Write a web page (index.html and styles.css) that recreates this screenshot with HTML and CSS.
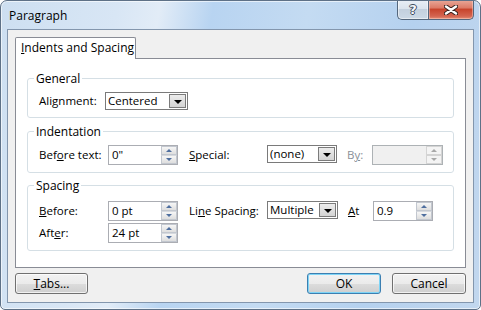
FILE: index.html
```html
<!DOCTYPE html>
<html lang="en">
<head>
    <meta charset="UTF-8">
    <title>Paragraph</title>
    <link rel="stylesheet" href="styles.css">
</head>
<body>
    <div class="window">
        <div class="titlebar">
            <span class="title">Paragraph</span>
            <div class="caption-buttons">
                <div class="cap-btn help"><span class="help-glyph">?</span></div>
                <div class="cap-btn close">
                    <svg width="14" height="10" viewBox="0 0 14 10">
                        <path d="M2 1.5 L12 8.5 M12 1.5 L2 8.5" stroke="#3b2420" stroke-width="4.4" stroke-linecap="round"/>
                        <path d="M2 1.5 L12 8.5 M12 1.5 L2 8.5" stroke="#ffffff" stroke-width="2.4" stroke-linecap="round"/>
                    </svg>
                </div>
            </div>
        </div>
        <div class="client">
            <div class="tabs">
                <div class="tab active"><u>I</u>ndents and Spacing</div>
            </div>
            <div class="tab-panel">
                <fieldset class="group group-general">
                    <legend>General</legend>
                    <div class="row row-short">
                        <label class="lbl lbl-align">Ali<u>g</u>nment:</label>
                        <div class="combo combo-align">
                            <span class="combo-text">Centered</span>
                            <span class="combo-btn"><span class="arrow-down"></span></span>
                        </div>
                    </div>
                </fieldset>

                <fieldset class="group group-indent">
                    <legend>Indentation</legend>
                    <div class="row">
                        <label class="lbl lbl-first">Bef<u>o</u>re text:</label>
                        <div class="spin">
                            <span class="spin-text">0"</span>
                            <span class="spin-btns">
                                <span class="spin-up"><span class="tri-up"></span></span>
                                <span class="spin-down"><span class="tri-down"></span></span>
                            </span>
                        </div>
                        <label class="lbl lbl-second"><u>S</u>pecial:</label>
                        <div class="combo combo-small">
                            <span class="combo-text">(none)</span>
                            <span class="combo-btn"><span class="arrow-down"></span></span>
                        </div>
                        <label class="lbl lbl-third disabled">B<u>y</u>:</label>
                        <div class="spin spin-disabled">
                            <span class="spin-text"></span>
                            <span class="spin-btns">
                                <span class="spin-up"><span class="tri-up"></span></span>
                                <span class="spin-down"><span class="tri-down"></span></span>
                            </span>
                        </div>
                    </div>
                </fieldset>

                <fieldset class="group group-spacing">
                    <legend>Spacing</legend>
                    <div class="row">
                        <label class="lbl lbl-first"><u>B</u>efore:</label>
                        <div class="spin">
                            <span class="spin-text">0 pt</span>
                            <span class="spin-btns">
                                <span class="spin-up"><span class="tri-up"></span></span>
                                <span class="spin-down"><span class="tri-down"></span></span>
                            </span>
                        </div>
                        <label class="lbl lbl-second">Li<u>n</u>e Spacing:</label>
                        <div class="combo combo-small combo-line">
                            <span class="combo-text">Multiple</span>
                            <span class="combo-btn"><span class="arrow-down"></span></span>
                        </div>
                        <label class="lbl lbl-third"><u>A</u>t</label>
                        <div class="spin spin-at">
                            <span class="spin-text">0.9</span>
                            <span class="spin-btns">
                                <span class="spin-up"><span class="tri-up"></span></span>
                                <span class="spin-down"><span class="tri-down"></span></span>
                            </span>
                        </div>
                    </div>
                    <div class="row">
                        <label class="lbl lbl-first">Aft<u>e</u>r:</label>
                        <div class="spin">
                            <span class="spin-text">24 pt</span>
                            <span class="spin-btns">
                                <span class="spin-up"><span class="tri-up"></span></span>
                                <span class="spin-down"><span class="tri-down"></span></span>
                            </span>
                        </div>
                    </div>
                </fieldset>
            </div>
            <div class="footer">
                <button class="btn"><u>T</u>abs...</button>
                <button class="btn btn-default">OK</button>
                <button class="btn">Cancel</button>
            </div>
        </div>
    </div>
</body>
</html>
```

FILE: styles.css
```css
body {
    margin: 0;
    font-family: "Open Sans", "Noto Sans", sans-serif;
    font-size: 11.5px;
    color: #000;
    background: #ffffff;
}

u {
    text-decoration: underline;
    text-underline-offset: 1px;
}

/* window frame */
.window {
    width: 481px;
    height: 310px;
    box-sizing: border-box;
    border: 1px solid #5e7187;
    border-radius: 7px 7px 5px 5px;
    background: linear-gradient(100deg, #cddff1 0%, #d8e6f5 22%, #e2ecf7 30%, #b8d4f1 40%, #c4dbf2 58%, #b5d1ef 78%, #c2d7ee 100%);
    box-shadow: inset 0 0 0 1px rgba(255, 255, 255, 0.6);
    display: flex;
    flex-direction: column;
    overflow: hidden;
}

.titlebar {
    height: 28px;
    display: flex;
    align-items: flex-start;
    padding-left: 8px;
}

.title {
    margin-top: 7px;
    line-height: 16px;
    font-size: 12px;
}

.caption-buttons {
    display: flex;
    margin-left: auto;
    margin-right: 6px;
    margin-top: -1px;
}

.cap-btn {
    height: 20px;
    box-sizing: border-box;
    border: 1px solid #54677d;
    border-top: none;
    display: flex;
    align-items: center;
    justify-content: center;
}

.help {
    width: 31px;
    border-right: none;
    border-radius: 0 0 0 5px;
    background: linear-gradient(#e9eff6 0%, #dbe4ee 45%, #c3d0de 50%, #ccd9e6 100%);
    box-shadow: inset 0 0 0 1px rgba(255, 255, 255, 0.5);
}

.help-glyph {
    font-family: "DejaVu Sans", sans-serif;
    font-weight: bold;
    font-size: 13px;
    line-height: 13px;
    color: #f5f7fa;
    text-shadow: 1px 0 #3d4c5e, -1px 0 #3d4c5e, 0 1px #3d4c5e, 0 -1px #3d4c5e;
}

.close {
    width: 46px;
    border-radius: 0 0 5px 0;
    background: linear-gradient(#e9a99a 0%, #dd7c68 40%, #c8452d 50%, #d46450 85%, #e58f75 100%);
    box-shadow: inset 0 0 0 1px rgba(255, 220, 210, 0.45);
}

/* client area */
.client {
    flex: 1;
    margin: 0 6px 6px;
    border: 1px solid #8396ad;
    background: #f0f0f0;
    padding: 7px 7px 0 7px;
}

.tabs {
    display: flex;
    position: relative;
    z-index: 1;
    margin-bottom: -1px;
}

.tab {
    width: 121px;
    height: 22px;
    box-sizing: border-box;
    border: 1px solid #898c95;
    border-bottom: none;
    border-radius: 2px 2px 0 0;
    background: #ffffff;
    padding-left: 5px;
    line-height: 20px;
    font-size: 12px;
}

.tab-panel {
    height: 210px;
    box-sizing: border-box;
    border: 1px solid #898c95;
    background: #ffffff;
    padding: 0 11px;
}

/* group boxes */
.group {
    margin: 0;
    border: 1px solid #d5dfe5;
    border-radius: 3px;
    padding: 6px 10px 7px 11px;
}

.group legend {
    padding: 0 2px;
    margin-left: -5px;
    line-height: 15px;
    font-size: 12px;
}

.group-general {
    margin-top: 12px;
}

.group-indent {
    margin-top: 6px;
}

.group-spacing {
    margin-top: 5px;
    padding-top: 8px;
}

.row {
    display: flex;
    align-items: flex-start;
    height: 20px;
}

.row-short {
    height: 18px;
}

.row + .row {
    margin-top: 2px;
}

.lbl {
    line-height: 20px;
    white-space: nowrap;
}

.lbl-align {
    width: 66px;
    line-height: 18px;
}

.lbl-first {
    width: 69px;
}

.lbl-second {
    width: 78px;
    margin-left: 11px;
}

.lbl-third {
    width: 25px;
    margin-left: 10px;
}

.disabled {
    color: #8a9099;
}

/* combo box */
.combo {
    height: 18px;
    box-sizing: border-box;
    border: 1px solid #7a7a7a;
    background: #ffffff;
    display: flex;
    align-items: stretch;
}

.combo-align {
    width: 83px;
}

.combo-small {
    width: 70px;
}

.combo-line {
    width: 71px;
}

.combo-text {
    flex: 1;
    padding-left: 2px;
    line-height: 16px;
    white-space: nowrap;
    overflow: hidden;
}

.combo-btn {
    width: 17px;
    margin: 1px;
    box-sizing: border-box;
    border: 1px solid #7b7b7b;
    background: linear-gradient(#ececec, #d4d4d4);
    display: flex;
    align-items: center;
    justify-content: center;
}

.arrow-down {
    width: 0;
    height: 0;
    margin-top: 2px;
    border-left: 4px solid transparent;
    border-right: 4px solid transparent;
    border-top: 4px solid #000000;
}

/* spinner */
.spin {
    width: 70px;
    height: 20px;
    box-sizing: border-box;
    border: 1px solid #abadb3;
    background: #ffffff;
    display: flex;
}

.spin-at {
    width: 60px;
}

.spin-text {
    flex: 1;
    padding-left: 3px;
    line-height: 18px;
}

.spin-btns {
    width: 16px;
    display: flex;
    flex-direction: column;
}

.spin-up,
.spin-down {
    flex: 1;
    box-sizing: border-box;
    border: 1px solid #c2c7cf;
    background: linear-gradient(#f6f6f6, #dedede);
    display: flex;
    align-items: center;
    justify-content: center;
}

.spin-down {
    border-top-color: #d6d9de;
}

.tri-up {
    width: 0;
    height: 0;
    border-left: 3px solid transparent;
    border-right: 3px solid transparent;
    border-bottom: 3px solid #4f6f9f;
}

.tri-down {
    width: 0;
    height: 0;
    border-left: 3px solid transparent;
    border-right: 3px solid transparent;
    border-top: 3px solid #4f6f9f;
}

.spin-disabled {
    width: 71px;
    border-color: #adb2b5;
    background: #f0f0f0;
}

.spin-disabled .spin-up,
.spin-disabled .spin-down {
    background: #f4f4f4;
    border-color: #d4d4d4;
}

.spin-disabled .tri-up {
    border-bottom-color: #a8a8a8;
}

.spin-disabled .tri-down {
    border-top-color: #a8a8a8;
}

/* bottom buttons */
.footer {
    display: flex;
    margin-top: 5px;
}

.btn {
    width: 73px;
    height: 21px;
    box-sizing: border-box;
    border: 1px solid #707070;
    border-radius: 3px;
    background: linear-gradient(#f2f2f2 0%, #ebebeb 50%, #dddddd 51%, #cfcfcf 100%);
    box-shadow: inset 0 0 0 1px rgba(255, 255, 255, 0.7);
    font-family: inherit;
    font-size: 12px;
    padding: 0;
    line-height: 18px;
    color: #000;
}

.btn-default {
    width: 74px;
    margin-left: auto;
    border-color: #3c7fb1;
    box-shadow: inset 0 0 0 1px #7ed4f6;
}

.btn-default + .btn {
    width: 74px;
    margin-left: 11px;
}
```
